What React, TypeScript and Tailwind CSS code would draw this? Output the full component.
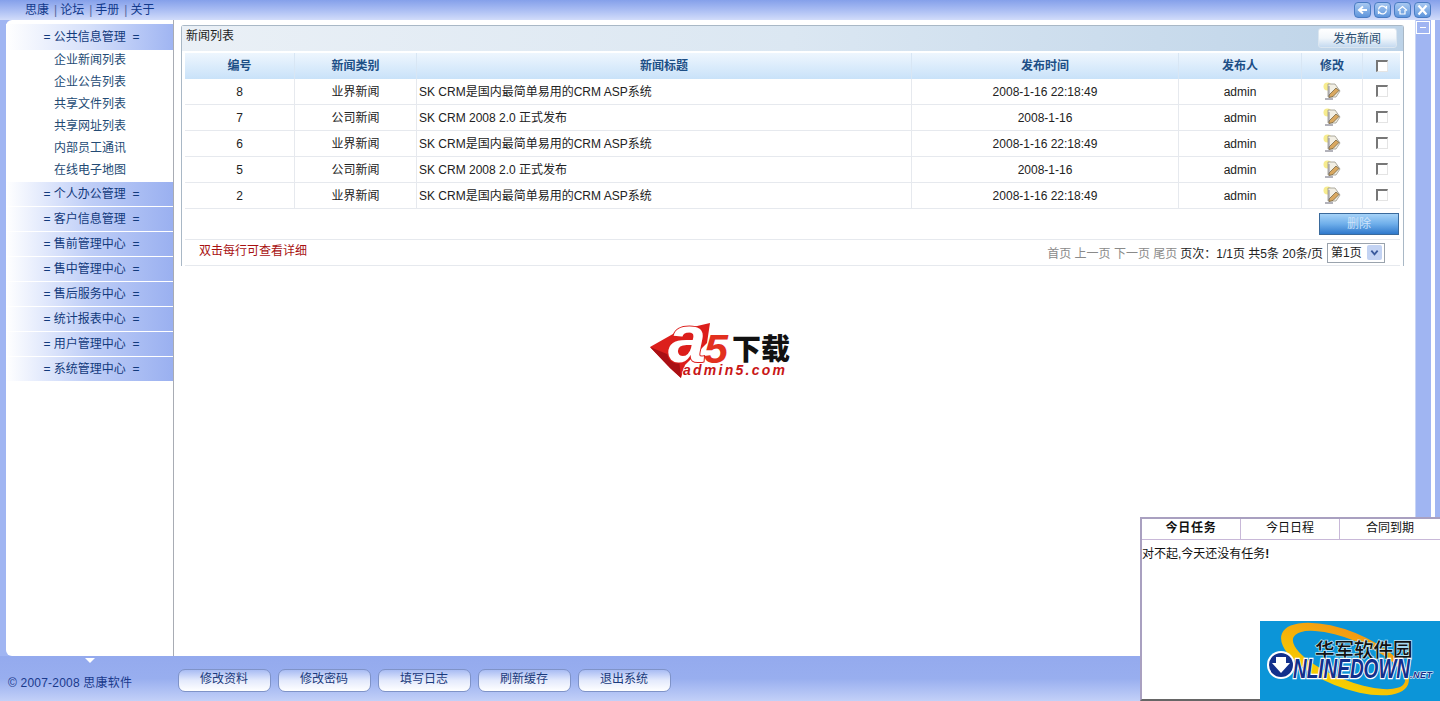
import React from 'react';

const FONT = '"Liberation Sans", "Noto Sans CJK SC", sans-serif';

const sideTop = ['企业新闻列表', '企业公告列表', '共享文件列表', '共享网址列表', '内部员工通讯', '在线电子地图'];
const sideGroups = ['个人办公管理', '客户信息管理', '售前管理中心', '售中管理中心', '售后服务中心', '统计报表中心', '用户管理中心', '系统管理中心'];
const footButtons = ['修改资料', '修改密码', '填写日志', '刷新缓存', '退出系统'];

const rows = [
  { id: '8', type: '业界新闻', title: 'SK CRM是国内最简单易用的CRM ASP系统', time: '2008-1-16 22:18:49' },
  { id: '7', type: '公司新闻', title: 'SK CRM 2008 2.0 正式发布', time: '2008-1-16' },
  { id: '6', type: '业界新闻', title: 'SK CRM是国内最简单易用的CRM ASP系统', time: '2008-1-16 22:18:49' },
  { id: '5', type: '公司新闻', title: 'SK CRM 2008 2.0 正式发布', time: '2008-1-16' },
  { id: '2', type: '业界新闻', title: 'SK CRM是国内最简单易用的CRM ASP系统', time: '2008-1-16 22:18:49' },
];

function TopIcon({ kind }: { kind: string }) {
  return (
    <div className="w-[17px] h-[16px] rounded-[4px] border border-[#4a7cc4] bg-gradient-to-b from-[#a8c8f0] to-[#5f96dc]">
      <svg viewBox="0 0 15 14" className="w-full h-full" fill="none" stroke="#fff" strokeWidth="1.6">
        {kind === 'back' && <path d="M12 7H5M8 3.500L4 7l4 3.500" strokeWidth="2" />}
        {kind === 'refresh' && <path d="M3.500 6.500a4 4 0 0 1 7-2l1 1V3M11.500 7.500a4 4 0 0 1-7 2l-1-1V11" strokeWidth="1.300" />}
        {kind === 'home' && <path d="M3 7.500l4.500-4 4.500 4M5 7v4h5V7" strokeWidth="1.200" />}
        {kind === 'close' && <path d="M3.500 2.500l8 9M11.500 2.500l-8 9" strokeWidth="2.200" />}
      </svg>
    </div>
  );
}

function EditIcon() {
  return (
    <svg viewBox="0 0 18 18" className="w-[18px] h-[18px] mb-[2px]">
      <circle cx="4.500" cy="4.500" r="4" fill="#f7ec8e" />
      <path d="M5 2h7l5 7-4 6H5z" fill="#f2efe4" stroke="#9a978a" strokeWidth="0.8" />
      <path d="M6 13l7-7 3 2.500-6 6-4 1z" fill="#d9a860" stroke="#6a5a38" strokeWidth="0.7" />
      <path d="M2 17h8" stroke="#667" strokeWidth="1" />
      <path d="M6 4v10" stroke="#778" strokeWidth="0.8" />
    </svg>
  );
}

function Check() {
  return <div className="w-[12px] h-[12px] mb-[1px] border-t-2 border-l-2 border-r border-b border-t-[#777] border-l-[#777] border-r-[#e4e4e4] border-b-[#e4e4e4] bg-white" />;
}

function Cell({ w, children, last }: { w: string; children: React.ReactNode; last?: boolean }) {
  return (
    <div className={`${w} h-full shrink-0 flex items-center justify-center ${last ? '' : 'border-r border-[#e6e9ee]'}`}>
      {children}
    </div>
  );
}

function HeaderCell({ w, children, last }: { w: string; children: React.ReactNode; last?: boolean }) {
  return (
    <div className={`${w} h-full shrink-0 flex items-center justify-center font-bold text-[#1d4f86] ${last ? '' : 'border-r border-[#d8e6f4]'}`}>
      {children}
    </div>
  );
}

function A5Logo() {
  return (
    <svg viewBox="0 0 142 58" className="w-[142px] h-[58px]">
      <path d="M1 26L31 9 61 2 58 22 44 36 36 44 32 57 21 47z" fill="#dc1f1c" />
      <path d="M1 26l29 12 2 19-11-10z" fill="#a90f14" />
      <text x="19" y="41" fontFamily="Liberation Sans" fontSize="66" fontWeight="700" fontStyle="italic" fill="#fff" stroke="#dc1f1c" strokeWidth="2" paintOrder="stroke" textLength="38" lengthAdjust="spacingAndGlyphs">a</text>
      <text x="55" y="42" fontFamily="Liberation Sans" fontSize="40" fontWeight="700" fontStyle="italic" fill="#e2301f" textLength="24" lengthAdjust="spacingAndGlyphs">5</text>
      <text x="83" y="39" fontFamily="Noto Sans CJK SC" fontSize="29" fontWeight="900" fill="#111">下载</text>
      <text x="34" y="54" fontFamily="Liberation Sans" fontSize="14" fontWeight="700" fontStyle="italic" fill="#c91616" stroke="#fff" strokeWidth="1.500" paintOrder="stroke" textLength="102">admin5.com</text>
    </svg>
  );
}

function OnlineDownLogo() {
  return (
    <svg viewBox="0 0 180 80" className="w-[180px] h-[80px]">
      <defs>
        <linearGradient id="ring" x1="0" y1="0" x2="0" y2="1">
          <stop offset="0" stopColor="#f39a12" />
          <stop offset="1" stopColor="#f7d000" />
        </linearGradient>
      </defs>
      <rect width="180" height="80" fill="#0c95d8" />
      <ellipse cx="85" cy="38" rx="68" ry="28" transform="rotate(22 85 38)" fill="url(#ring)" />
      <ellipse cx="89" cy="39" rx="60" ry="20" transform="rotate(22 89 39)" fill="#0c95d8" />
      <text x="55" y="36" fontFamily="Noto Sans CJK SC" fontSize="19.500" fontWeight="500" fill="#111" stroke="#bfe4f5" strokeWidth="1.500" paintOrder="stroke">华军软件园</text>
      <circle cx="21" cy="44" r="14" fill="#fff" />
      <circle cx="21" cy="44" r="12" fill="#12308c" />
      <path d="M16 36h10v6h4l-9 10-9-10h4z" fill="#fff" />
      <text x="33" y="57" fontFamily="Liberation Sans" fontSize="28" fontWeight="700" fontStyle="italic" stroke="#fff" strokeWidth="2.500" paintOrder="stroke" fill="#12308c" textLength="117" lengthAdjust="spacingAndGlyphs">NLINEDOWN</text>
      <text x="150" y="57" fontFamily="Liberation Sans" fontSize="9" fontWeight="700" fontStyle="italic" fill="#12308c" stroke="#fff" strokeWidth="1" paintOrder="stroke" textLength="22">.NET</text>
    </svg>
  );
}

export default function App() {
  return (
    <div className="relative w-[1440px] h-[701px] overflow-hidden flex flex-col text-[12px] text-[#222]" style={{ fontFamily: FONT }}>
      {/* top bar */}
      <div className="h-[20px] shrink-0 bg-gradient-to-b from-[#85a0ea] via-[#aabdf3] to-[#d2dcfa] flex items-center justify-between pl-[25px] pr-[9px]">
        <div className="flex items-center text-[12px] text-[#123a8c] gap-[3px]">
          <span>思康</span><span className="ml-[2px] text-[#5a6a9c]">|</span>
          <span>论坛</span><span className="ml-[2px] text-[#5a6a9c]">|</span>
          <span>手册</span><span className="ml-[2px] text-[#5a6a9c]">|</span>
          <span>关于</span>
        </div>
        <div className="flex gap-[3px]">
          <TopIcon kind="back" />
          <TopIcon kind="refresh" />
          <TopIcon kind="home" />
          <TopIcon kind="close" />
        </div>
      </div>

      {/* middle */}
      <div className="flex h-[636px] shrink-0 bg-[#a0b5f2] pl-[6px]">
        <aside className="w-[168px] h-full shrink-0 bg-white rounded-tl-[6px] rounded-bl-[6px] border-r border-[#a8acb4] pt-[4px]">
          <div className="h-[26px] flex items-center justify-center text-[#123a7c] text-[12px] bg-gradient-to-r from-white via-[#d6e0fa] to-[#a0b5f2] pl-[4px]">
            = 公共信息管理 &nbsp;=
          </div>
          <div className="flex flex-col -mt-px pl-[48px] text-[#234a74]">
            {sideTop.map((s) => (
              <div key={s} className="h-[22px] flex items-center">{s}</div>
            ))}
          </div>
          <div className="flex flex-col gap-[1px] mt-[1px]">
            {sideGroups.map((s) => (
              <div key={s} className="h-[24px] flex items-center justify-center text-[#123a7c] bg-gradient-to-r from-white via-[#bfcef7] to-[#9ab0f0] pl-[4px]">
                = {s} &nbsp;=
              </div>
            ))}
          </div>
        </aside>

        <main className="w-[1241px] h-full shrink-0 bg-white pl-[7px] pt-[5px]">
          <div className="w-[1223px] h-[241px] border-x border-t border-[#a9b8c6] rounded-t-[3px] flex flex-col">
            <div className="h-[25px] shrink-0 flex items-start justify-between bg-gradient-to-r from-[#eaf0f6] via-[#dbe7f2] to-[#bdd3e8] pl-[4px] pr-[6px]">
              <span className="pt-[1px]">新闻列表</span>
              <div className="w-[79px] h-[20px] mt-[2px] flex items-center justify-center pt-[1px] pr-[1px] text-[#2c4f72] bg-gradient-to-b from-white via-[#f2f7fb] to-[#c5daf0] border border-[#dbe6f0] rounded-[3px]">发布新闻</div>
            </div>
            <div className="flex flex-col pl-[3px] pr-[3px] pt-[2px]">
              <div className="flex h-[26px] bg-gradient-to-b from-[#eef6fe] to-[#c9e2f9]">
                <HeaderCell w="w-[110px]">编号</HeaderCell>
                <HeaderCell w="w-[122px]">新闻类别</HeaderCell>
                <HeaderCell w="w-[495px]">新闻标题</HeaderCell>
                <HeaderCell w="w-[267px]">发布时间</HeaderCell>
                <HeaderCell w="w-[123px]">发布人</HeaderCell>
                <HeaderCell w="w-[61px]">修改</HeaderCell>
                <HeaderCell w="w-[37px]" last><Check /></HeaderCell>
              </div>
              {rows.map((r) => (
                <div key={r.id} className="flex h-[26px] border-b border-[#e6e9ee] items-center text-[#222]">
                  <Cell w="w-[110px]">{r.id}</Cell>
                  <Cell w="w-[122px]">{r.type}</Cell>
                  <Cell w="w-[495px]"><span className="w-full pl-[2px]">{r.title}</span></Cell>
                  <Cell w="w-[267px]">{r.time}</Cell>
                  <Cell w="w-[123px]">admin</Cell>
                  <Cell w="w-[61px]"><EditIcon /></Cell>
                  <Cell w="w-[37px]" last><Check /></Cell>
                </div>
              ))}
              <div className="h-[31px] flex justify-end items-start border-b border-[#e6e9ee] pt-[4px]">
                <div className="w-[80px] h-[22px] mr-[1px] flex items-center justify-center text-[#cfe4fa] border border-[#3a6a9c] bg-gradient-to-b from-[#a6d3f8] via-[#6eaeea] to-[#2f79cc]">删除</div>
              </div>
              <div className="h-[26px] flex items-center justify-between border-b border-[#e6e9ee]">
                <span className="ml-[14px] mb-[3px] text-[#a81010]">双击每行可查看详细</span>
                <div className="flex items-center mr-[15px] mt-[2px]">
                  <span className="text-[#8a8a8a] mr-[3px]">首页 上一页 下一页 尾页</span>
                  <span>页次：1/1页 共5条 20条/页</span>
                  <div className="ml-[4px] w-[58px] h-[20px] border border-[#9aa3ad] flex items-center justify-between pl-[3px] pr-[2px] -translate-y-px">
                    <span>第1页</span>
                    <div className="w-[15px] h-[15px] rounded-[2px] bg-[#c3d3f3] flex items-center justify-center">
                      <svg viewBox="0 0 10 10" className="w-[9px] h-[9px]" fill="none" stroke="#3a5a9c" strokeWidth="2"><path d="M1.500 3L5 7l3.500-4" /></svg>
                    </div>
                  </div>
                </div>
              </div>
            </div>
          </div>
        </main>

        {/* scrollbar */}
        <div className="w-[16px] h-full shrink-0 bg-[#a0b5f2] border-l border-[#c8d4f6] pt-[1px]">
          <div className="w-[14px] h-[13px] border border-white flex items-center justify-center">
            <div className="w-[6px] h-px bg-white" />
          </div>
        </div>
        <div className="w-[4px] h-full shrink-0 bg-white" />
        <div className="flex-1 bg-[#a0b5f2]" />
      </div>

      {/* bottom bar */}
      <div className="relative flex-1 bg-gradient-to-b from-[#94aaee] via-[#98aeef] to-[#c3d0f8] flex pl-[8px]">
        <div className="w-[170px] shrink-0 pt-[18px] tracking-[0.2px] text-[#1a3a8c]">© 2007-2008 思康软件</div>
        <div className="flex gap-[7px] pt-[13px]">
          {footButtons.map((b) => (
            <div key={b} className="w-[93px] h-[23px] flex items-start justify-center pr-[1px] rounded-[7px] border border-[#7f93c8] text-[#1a3a7c] bg-gradient-to-b from-[#a9bcf3] via-[#e4eafc] to-white">{b}</div>
          ))}
        </div>
        <div className="absolute left-[85px] top-[2px] w-0 h-0 border-x-[5px] border-x-transparent border-t-[5px] border-t-white" />
      </div>

      {/* logo stamped over the page */}
      <div className="absolute left-[649px] top-[321px]"><A5Logo /></div>

      {/* task popup */}
      <div className="absolute left-[1140px] top-[517px] w-[300px] h-[184px] bg-white border-2 border-[#a9a0c0] border-r-0 border-b-[#666]">
        <div className="flex h-[21px] border-b border-[#c8b8d8] text-[#111]">
          <div className="w-[99px] flex items-center justify-center pb-[2px] font-bold tracking-[0.8px] border-r border-[#c8b8d8]">今日任务</div>
          <div className="w-[99px] flex items-center justify-center pb-[2px] border-r border-[#c8b8d8]">今日日程</div>
          <div className="flex-1 flex items-center justify-center pb-[2px]">合同到期</div>
        </div>
        <div className="pt-[5px] text-[#111]">对不起,今天还没有任务<b>!</b></div>
      </div>

      <div className="absolute left-[1260px] top-[621px]"><OnlineDownLogo /></div>
    </div>
  );
}
